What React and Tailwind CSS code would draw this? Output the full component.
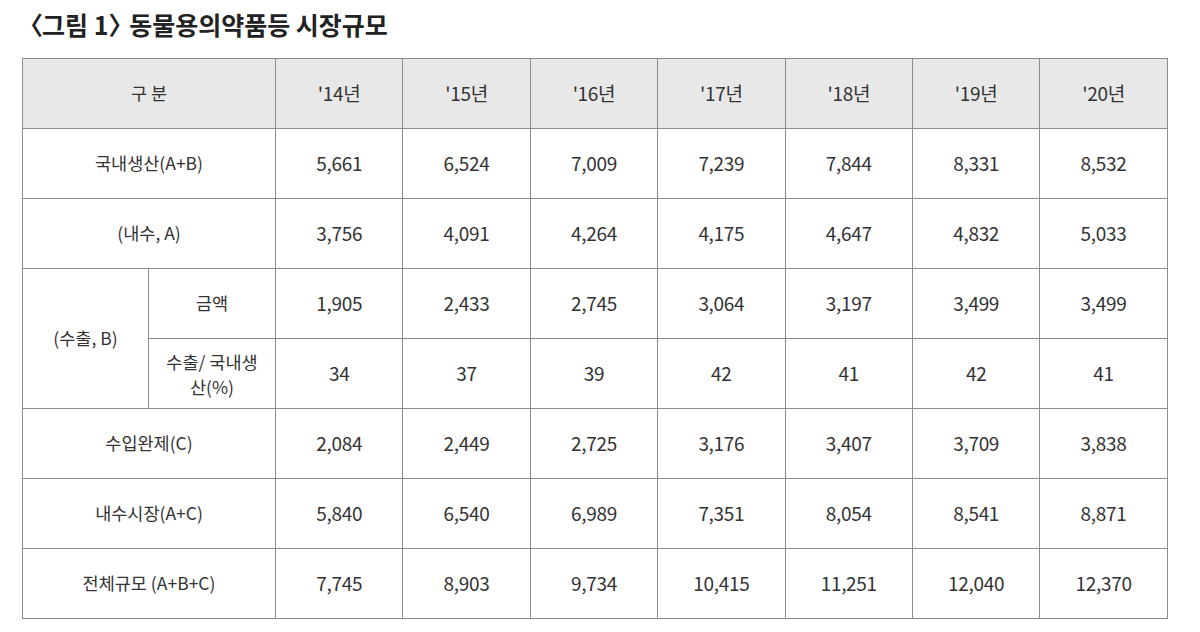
import React from 'react';

const years = ["'14년", "'15년", "'16년", "'17년", "'18년", "'19년", "'20년"];

const rows = [
  { label: '국내생산(A+B)', values: ['5,661', '6,524', '7,009', '7,239', '7,844', '8,331', '8,532'] },
  { label: '(내수, A)', values: ['3,756', '4,091', '4,264', '4,175', '4,647', '4,832', '5,033'] },
];

const tailRows = [
  { label: '수입완제(C)', values: ['2,084', '2,449', '2,725', '3,176', '3,407', '3,709', '3,838'] },
  { label: '내수시장(A+C)', values: ['5,840', '6,540', '6,989', '7,351', '8,054', '8,541', '8,871'] },
  { label: '전체규모 (A+B+C)', values: ['7,745', '8,903', '9,734', '10,415', '11,251', '12,040', '12,370'] },
];

const cell = 'border-[1.5px] border-[#8c8c8c] text-center align-middle font-normal';
const label = `${cell} text-[17.5px]`;
const num = `${cell} text-[19px] tracking-[-0.3px]`;

const App = () => {
  return (
    <div
      className="w-[1200px] h-[632px] bg-white text-[#333] overflow-hidden"
      style={{ fontFamily: '"Noto Sans CJK KR", "Noto Sans", sans-serif' }}
    >
      <h1 className="pl-[18px] pt-[6px] h-[58px] text-[25px] font-bold text-[#222]">
        <span className="tracking-[-1px]">〈</span>그림 1<span className="tracking-[-10px]">〉</span> 동물용의약품등 시장규모
      </h1>
      <table className="ml-[22px] w-[1145px] table-fixed border-collapse">
        <colgroup>
          <col className="w-[126px]" />
          <col className="w-[127px]" />
          {years.map((y) => (
            <col key={y} className="w-[127.4px]" />
          ))}
        </colgroup>
        <thead>
          <tr className="h-[70px] bg-[#e8e8e8]">
            <th colSpan={2} className={label}>구 분</th>
            {years.map((y) => (
              <th key={y} className={num}>{y}</th>
            ))}
          </tr>
        </thead>
        <tbody>
          {rows.map((r) => (
            <tr key={r.label} className="h-[70px]">
              <td colSpan={2} className={label}>{r.label}</td>
              {r.values.map((v, i) => (
                <td key={i} className={num}>{v}</td>
              ))}
            </tr>
          ))}
          <tr className="h-[70px]">
            <td rowSpan={2} className={label}>(수출, B)</td>
            <td className={label}>금액</td>
            {['1,905', '2,433', '2,745', '3,064', '3,197', '3,499', '3,499'].map((v, i) => (
              <td key={i} className={num}>{v}</td>
            ))}
          </tr>
          <tr className="h-[70px]">
            <td className={`${label} leading-[25px] px-1`}>수출/ 국내생<br />산(%)</td>
            {['34', '37', '39', '42', '41', '42', '41'].map((v, i) => (
              <td key={i} className={num}>{v}</td>
            ))}
          </tr>
          {tailRows.map((r) => (
            <tr key={r.label} className="h-[70px]">
              <td colSpan={2} className={label}>{r.label}</td>
              {r.values.map((v, i) => (
                <td key={i} className={num}>{v}</td>
              ))}
            </tr>
          ))}
        </tbody>
      </table>
    </div>
  );
};

export default App;
